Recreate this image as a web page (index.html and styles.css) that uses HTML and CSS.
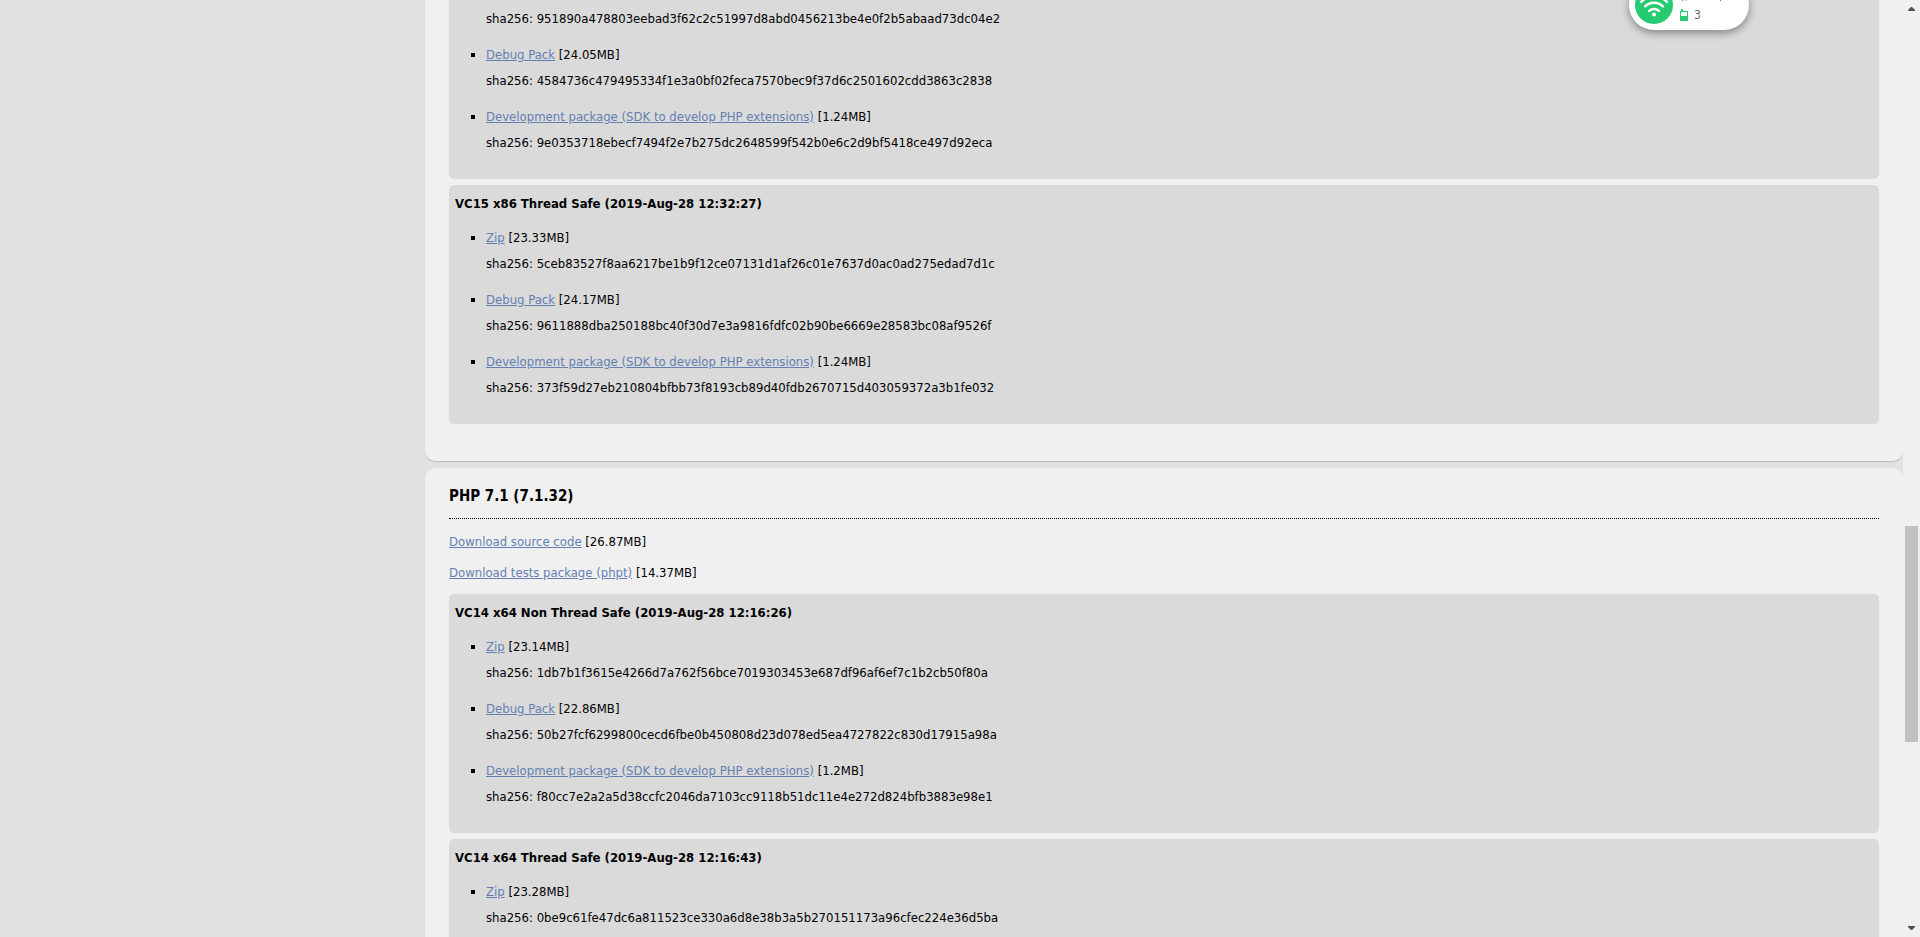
FILE: index.html
```
<!DOCTYPE html>
<html lang="en">
<head>
  <meta charset="UTF-8">
  <meta name="viewport" content="width=device-width, initial-scale=1.0">
  <title>PHP For Windows: Binaries and sources Releases</title>
  <link rel="stylesheet" href="styles.css">
</head>
<body>
  <div class="page">
    <main class="content">
      <section class="entry entry-first">
        <div class="build build-first">
          <ul>
            <li><span class="sha">sha256: 951890a478803eebad3f62c2c51997d8abd0456213be4e0f2b5abaad73dc04e2</span></li>
            <li><a href="#">Debug Pack</a> [24.05MB]<span class="sha">sha256: 4584736c479495334f1e3a0bf02feca7570bec9f37d6c2501602cdd3863c2838</span></li>
            <li><a href="#">Development package (SDK to develop PHP extensions)</a> [1.24MB]<span class="sha">sha256: 9e0353718ebecf7494f2e7b275dc2648599f542b0e6c2d9bf5418ce497d92eca</span></li>
          </ul>
        </div>
        <div class="build">
          <h4>VC15 x86 Thread Safe (2019-Aug-28 12:32:27)</h4>
          <ul>
            <li><a href="#">Zip</a> [23.33MB]<span class="sha">sha256: 5ceb83527f8aa6217be1b9f12ce07131d1af26c01e7637d0ac0ad275edad7d1c</span></li>
            <li><a href="#">Debug Pack</a> [24.17MB]<span class="sha">sha256: 9611888dba250188bc40f30d7e3a9816fdfc02b90be6669e28583bc08af9526f</span></li>
            <li><a href="#">Development package (SDK to develop PHP extensions)</a> [1.24MB]<span class="sha">sha256: 373f59d27eb210804bfbb73f8193cb89d40fdb2670715d403059372a3b1fe032</span></li>
          </ul>
        </div>
      </section>

      <section class="entry">
        <h3>PHP 7.1 (7.1.32)</h3>
        <p><a href="#">Download source code</a> [26.87MB]</p>
        <p><a href="#">Download tests package (phpt)</a> [14.37MB]</p>
        <div class="build">
          <h4>VC14 x64 Non Thread Safe (2019-Aug-28 12:16:26)</h4>
          <ul>
            <li><a href="#">Zip</a> [23.14MB]<span class="sha">sha256: 1db7b1f3615e4266d7a762f56bce7019303453e687df96af6ef7c1b2cb50f80a</span></li>
            <li><a href="#">Debug Pack</a> [22.86MB]<span class="sha">sha256: 50b27fcf6299800cecd6fbe0b450808d23d078ed5ea4727822c830d17915a98a</span></li>
            <li><a href="#">Development package (SDK to develop PHP extensions)</a> [1.2MB]<span class="sha">sha256: f80cc7e2a2a5d38ccfc2046da7103cc9118b51dc11e4e272d824bfb3883e98e1</span></li>
          </ul>
        </div>
        <div class="build">
          <h4>VC14 x64 Thread Safe (2019-Aug-28 12:16:43)</h4>
          <ul>
            <li><a href="#">Zip</a> [23.28MB]<span class="sha">sha256: 0be9c61fe47dc6a811523ce330a6d8e38b3a5b270151173a96cfec224e36d5ba</span></li>
          </ul>
        </div>
      </section>
    </main>

    <div class="scrollbar">
      <svg width="7" height="4" viewBox="0 0 7 4"><path d="M0 4V3L3 0h1l3 3v1z" fill="#505050"/></svg>
      <div class="track"><div class="thumb"></div></div>
      <svg width="7" height="4" viewBox="0 0 7 4"><path d="M0 0v1l3 3h1l3-3V0z" fill="#505050"/></svg>
    </div>
  </div>

  <!-- wifi status bubble -->
  <div class="wifi">
    <svg class="wifi-icon" width="38" height="38" viewBox="0 0 38 38">
      <circle cx="19" cy="19" r="19" fill="#26cb70"/>
      <g fill="none" stroke="#fff" stroke-width="2.4" stroke-linecap="round">
        <path d="M6 16a18.400 18.400 0 0 1 26 0"/>
        <path d="M10 20.500a12.800 12.800 0 0 1 18 0"/>
        <path d="M14 25a7.200 7.200 0 0 1 10 0"/>
      </g>
      <circle cx="19" cy="28.500" r="2" fill="#fff"/>
    </svg>
    <div class="stats">
      <!-- up/down traffic arrows -->
      <svg class="traffic" width="42" height="8" viewBox="0 0 42 8">
        <path d="M2 8V3H0l3-3v8z" fill="#26cb70"/>
        <path d="M5 0h2v5h1L6 8 4 5h1z" fill="#e8684a"/>
        <path d="M40 5h1v3h-1z" fill="#777"/>
      </svg>
      <div class="devices">
        <svg width="8" height="12" viewBox="0 0 8 12"><path d="M1 0h2v2h5v10H0V2h1z" fill="#26cb70"/><path d="M1 3h6v4H1z" fill="#fff"/></svg>
        <span>3</span>
      </div>
    </div>
  </div>
</body>
</html>
```

FILE: styles.css
```
body {
  margin: 0;
  background: #e2e2e2;
  color: #000;
  font-family: Tahoma, "DejaVu Sans Condensed", sans-serif;
  font-size: 13px;
  line-height: 26px;
}
a {
  color: #6480b3;
}
h3, h4, p, ul {
  margin: 0;
}
.page {
  display: flex;
  height: 100vh;
  overflow: hidden;
}
.content {
  flex: 1;
  margin-left: 425px;
}
.entry {
  margin-bottom: 7px;
  padding: 15px 24px 37px;
  background: #f0f0f0;
  border-radius: 10px;
  box-shadow: 0 1px 1px #bbb;
}
.entry-first {
  padding-top: 0;
  border-radius: 0 0 10px 10px;
}
.entry h3 {
  margin-bottom: 10px;
  padding-bottom: 9px;
  border-bottom: 1px dotted #000;
  font-size: 15px;
}
.entry p {
  margin-bottom: 5px;
}
.entry p + .build {
  margin-top: 8px;
}
.build {
  margin-top: 6px;
  padding: 6px 6px 23px;
  background: #dadada;
  border-radius: 5px;
}
.build-first {
  margin-top: 0;
  border-radius: 0 0 5px 5px;
}
.build h4 {
  margin-bottom: 8px;
  font-size: 13px;
}
.build ul {
  padding-left: 31px;
  list-style: square;
}
.build li + li {
  margin-top: 10px;
}
.build-first li:first-child {
  list-style: none;
}
.sha {
  display: block;
}
.scrollbar {
  display: flex;
  flex-direction: column;
  align-items: center;
  box-sizing: border-box;
  width: 17px;
  padding: 7px 0;
  background: #f0f0f0;
}
.track {
  flex: 1;
  width: 13px;
}
.thumb {
  height: 216px;
  margin-top: 515px;
  background: #c1c1c1;
}
.wifi {
  position: absolute;
  top: -20px;
  right: 171px;
  display: flex;
  box-sizing: border-box;
  width: 120px;
  height: 50px;
  padding: 6px;
  background: #fff;
  border-radius: 25px;
  box-shadow: 0 3px 8px rgba(0,0,0,0.4);
}
.stats {
  display: flex;
  flex-direction: column;
  gap: 8px;
  padding: 7px 0 0 7px;
}
.devices {
  display: flex;
  align-items: center;
  gap: 6px;
  height: 12px;
  color: #666;
  font-size: 12px;
}
```
